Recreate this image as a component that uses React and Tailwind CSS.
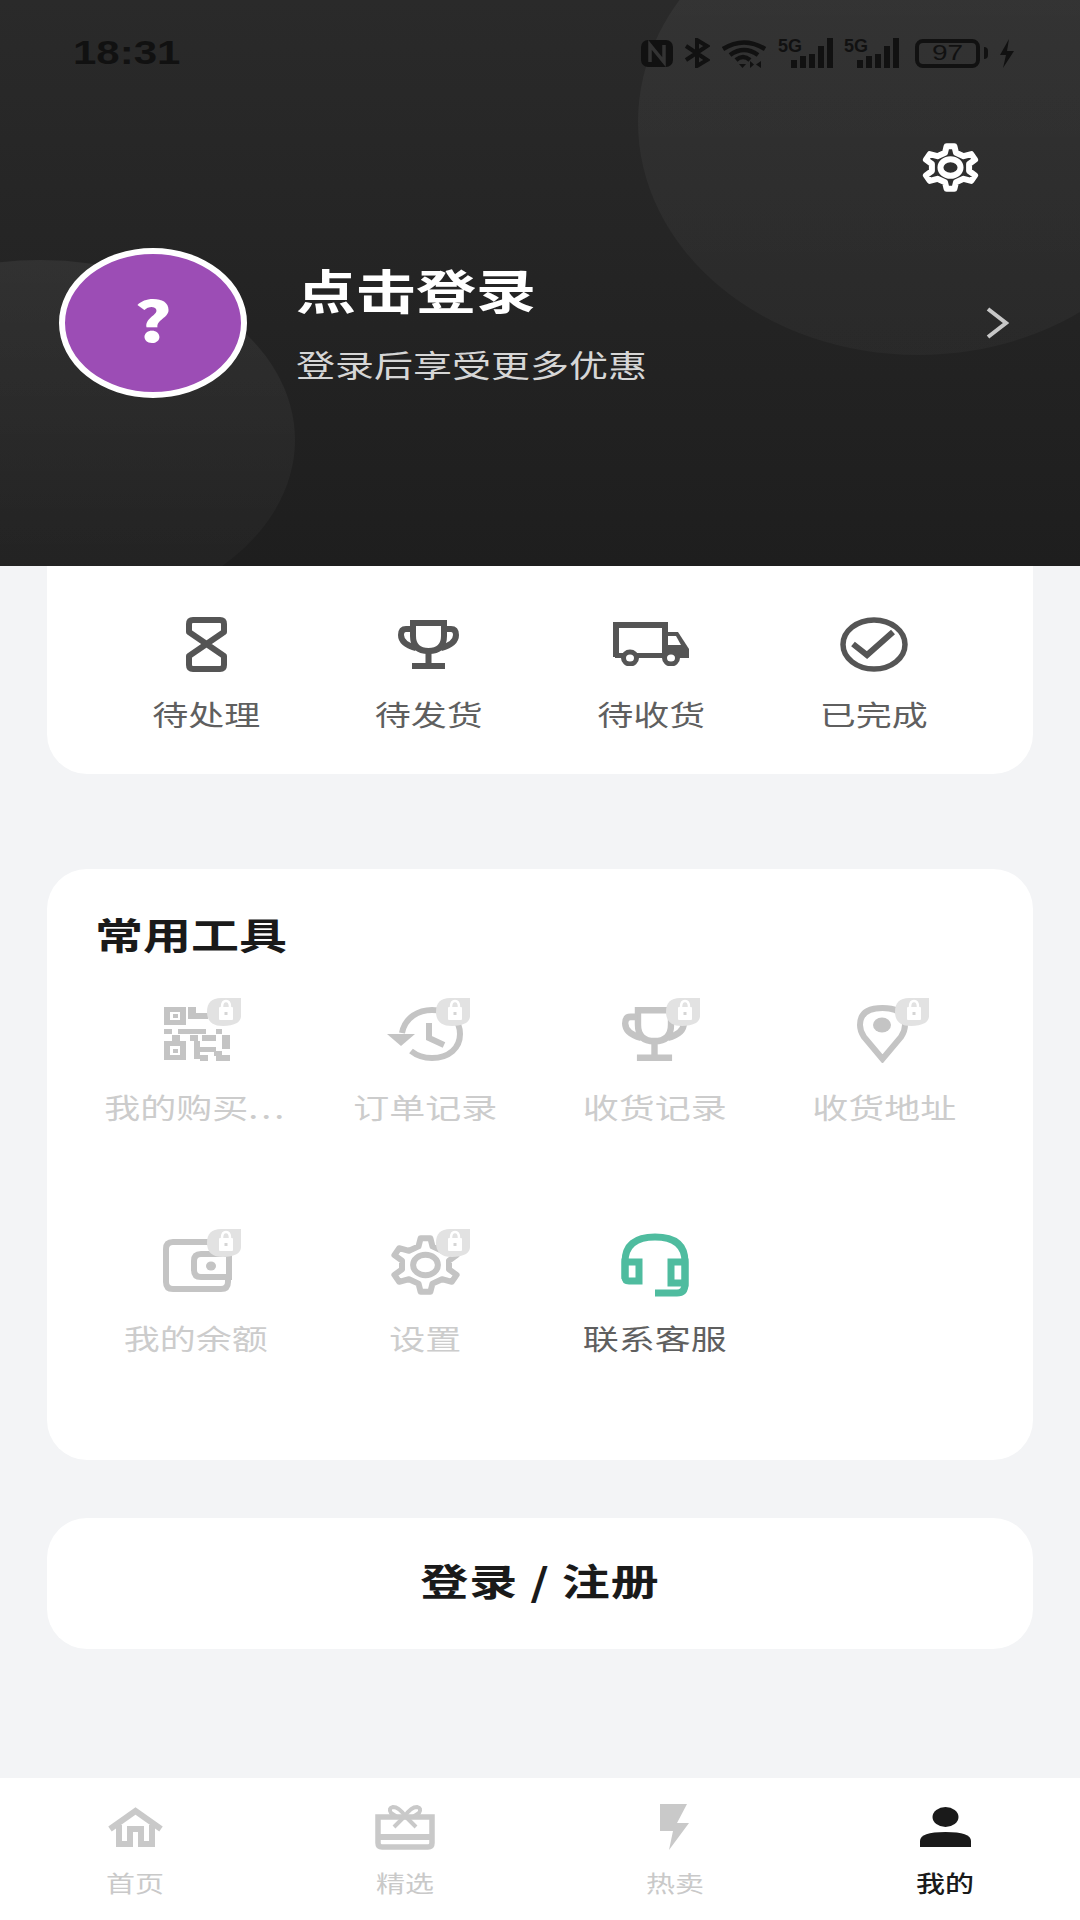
import React from "react";

// builds a gear outline with n teeth, stretched to rx / ry
const gearPath = (cx, cy, rx, ry, n) => {
  const pts = [];
  const step = (Math.PI * 2) / n;
  for (let i = 0; i < n; i++) {
    const a = i * step - Math.PI / 2;
    const corners = [
      [a - step * 0.28, 0.72],
      [a - step * 0.14, 1],
      [a + step * 0.14, 1],
      [a + step * 0.28, 0.72],
    ];
    corners.forEach(([t, r]) => {
      pts.push(`${(cx + Math.cos(t) * rx * r).toFixed(1)} ${(cy + Math.sin(t) * ry * r).toFixed(1)}`);
    });
  }
  return `M${pts.join("L")}Z`;
};

const Gear = ({ w, h, color, sw = 6, hole = 0.34 }) => (
  <svg width={w} height={h} viewBox={`0 0 ${w} ${h}`} fill="none" stroke={color} strokeWidth={sw} strokeLinejoin="round">
    <path d={gearPath(w / 2, h / 2, w / 2 - sw / 2, h / 2 - sw / 2, 6)} />
    <ellipse cx={w / 2} cy={h / 2} rx={w * hole * 0.5} ry={h * hole * 0.5} />
  </svg>
);

const Trophy = ({ w, h, color }) => (
  <svg width={w} height={h} viewBox="0 0 61 49" preserveAspectRatio="none" fill="none" stroke={color} strokeWidth="6">
    <path d="M15 3H46V16Q46 31 30.5 31Q15 31 15 16Z" />
    <path d="M15 9H8Q3 9 3 15Q3 24 18 28M46 9H53Q58 9 58 15Q58 24 43 28" />
    <path d="M30.5 31V44M14 46H47" />
  </svg>
);

const Hourglass = () => (
  <svg width="41" height="55" viewBox="0 0 41 55" fill="none" stroke="#555" strokeWidth="6">
    <path d="M7 3H34Q38 3 38 7V15L3 39V48Q3 52 7 52H34Q38 52 38 48V39L3 15V7Q3 3 7 3Z" strokeLinejoin="round" />
  </svg>
);

const Truck = () => (
  <svg width="76" height="44" viewBox="0 0 76 44" fill="none">
    <path d="M3 35V3H52V35" stroke="#555" strokeWidth="6" />
    <path d="M52 10H65L76 27V36H52Z" fill="#555" />
    <path d="M55 14H63L68 23H55Z" fill="#fff" />
    <rect x="2" y="31" width="50" height="5" fill="#555" />
    <ellipse cx="17" cy="36" rx="6.5" ry="6" fill="#fff" stroke="#555" strokeWidth="5" />
    <ellipse cx="58" cy="36" rx="6.5" ry="6" fill="#fff" stroke="#555" strokeWidth="5" />
  </svg>
);

const CheckOval = () => (
  <svg width="68" height="55" viewBox="0 0 68 55" fill="none" stroke="#555" strokeWidth="5.5">
    <ellipse cx="34" cy="27.5" rx="31" ry="24.5" />
    <path d="M13 27L27 38L53 15" strokeWidth="6" />
  </svg>
);

const qrCells = [
  [24, 0, 8, 12], [32, 6, 12, 6], [44, 0, 8, 6], [54, 6, 10, 10],
  [0, 22, 8, 5], [14, 22, 28, 5], [52, 22, 6, 5], [8, 28, 8, 6], [26, 28, 8, 6], [38, 28, 14, 6], [58, 28, 8, 10],
  [30, 34, 6, 18], [36, 40, 16, 5], [50, 44, 8, 5], [36, 48, 8, 6], [52, 48, 14, 6], [58, 38, 8, 4],
];

const QrCode = () => (
  <svg width="66" height="54" viewBox="0 0 66 54" fill="#c4c4c4">
    <path fillRule="evenodd" d="M0 0H22V18H0ZM6 5V13H16V5Z" />
    <rect x="9" y="7" width="5" height="4" />
    <path fillRule="evenodd" d="M0 34H22V53H0ZM6 39V48H16V39Z" />
    <rect x="9" y="42" width="5" height="4" />
    {qrCells.map(([x, y, w, h]) => (
      <rect key={`${x}-${y}`} x={x} y={y} width={w} height={h} />
    ))}
  </svg>
);

const History = () => (
  <svg width="76" height="54" viewBox="0 0 76 54" fill="none" stroke="#c4c4c4" strokeWidth="6">
    <path d="M15 26C18 10 32 3 45 3C62 3 73 13 73 27C73 41 62 51 45 51C36 51 29 48 24 44" />
    <path d="M0 27H28L14 39Z" fill="#c4c4c4" stroke="none" />
    <path d="M42 16V31L57 38" />
  </svg>
);

const Pin = () => (
  <svg width="51" height="58" viewBox="0 0 51 58" fill="none" stroke="#c4c4c4" strokeWidth="6">
    <path d="M25.5 54L7 32Q3 26 3 20Q3 3 25.5 3Q48 3 48 20Q48 26 44 32Z" />
    <ellipse cx="25" cy="20" rx="9" ry="7.5" fill="#c4c4c4" stroke="none" />
  </svg>
);

const Wallet = () => (
  <svg width="69" height="53" viewBox="0 0 69 53" fill="none" stroke="#c4c4c4" strokeWidth="6">
    <path d="M46 3H10Q3 3 3 10V43Q3 50 10 50H58Q65 50 65 43V40" />
    <path d="M66 15H38Q31 15 31 22V31Q31 38 38 38H66Z" />
    <ellipse cx="48" cy="27" rx="5" ry="4.5" fill="#c4c4c4" stroke="none" />
  </svg>
);

const Headset = () => (
  <svg width="68" height="64" viewBox="0 0 68 64" fill="none" stroke="#4fbc9f" strokeWidth="7">
    <path d="M4 46V29Q4 4 34 4Q64 4 64 29V51Q64 60 56 60H34" />
    <path d="M4 29H18V48H8Q4 48 4 44Z" />
    <path d="M64 29H50V50H64Z" />
  </svg>
);

const LockBadge = () => (
  <svg className="absolute left-[11px] top-0" width="34" height="28" viewBox="0 0 34 28">
    <path d="M14 0H34V18Q34 22 30 25Q24 28 16 28Q0 28 0 14Q0 0 14 0Z" fill="#e2e2e2" />
    <path d="M15 9Q15 3 19 3Q23 3 23 9" fill="none" stroke="#fff" strokeWidth="2.5" />
    <rect x="12" y="9" width="14" height="13" rx="1" fill="#fff" />
    <rect x="17.5" y="14" width="3" height="3" fill="#d5d5d5" />
  </svg>
);

const HomeIcon = () => (
  <svg width="55" height="40" viewBox="0 0 55 40" fill="none" stroke="#c9c9c9" strokeWidth="6">
    <path d="M2 22L27.5 4L53 22" />
    <path d="M11 18V37H22V22H33V37H44V18" />
  </svg>
);

const GiftIcon = () => (
  <svg width="60" height="45" viewBox="0 0 60 45" fill="none" stroke="#c9c9c9" strokeWidth="5.5">
    <path d="M3 12H57V38Q57 42 53 42H7Q3 42 3 38Z" />
    <path d="M3 32H57" strokeWidth="6" />
    <path d="M30 11Q24 2 18 2Q13 3 16 8L22 12M30 11Q36 2 42 2Q47 3 44 8L38 12M30 11L19 22M30 11L41 22" strokeWidth="4" />
  </svg>
);

const BoltIcon = () => (
  <svg width="30" height="46" viewBox="0 0 30 46" fill="#c9c9c9">
    <path d="M0 0H27L17 19H29L9 46L13 27H0Z" />
  </svg>
);

const PersonIcon = () => (
  <svg width="51" height="40" viewBox="0 0 51 40" fill="#1a1a1a">
    <ellipse cx="25.5" cy="10" rx="13" ry="10" />
    <path d="M0 40V34Q0 25 25.5 25Q51 25 51 34V40Z" />
  </svg>
);

const Signal = () => (
  <svg width="55" height="30" viewBox="0 0 55 30" fill="#111" className="overflow-visible">
    <text x="0" y="14" fontSize="18" fontWeight="700" fontFamily="Liberation Sans, sans-serif">5G</text>
    <rect x="13" y="22" width="6" height="8" />
    <rect x="22" y="18" width="6" height="12" />
    <rect x="31" y="16" width="6" height="14" />
    <rect x="40" y="8" width="6" height="22" />
    <rect x="49" y="0" width="6" height="30" />
  </svg>
);

const StatusBar = () => (
  <div className="flex items-center justify-between pl-[73px] pr-[66px] pt-[38px] h-[68px] relative">
    <span className="block scale-y-[0.8] text-[42px] leading-none font-bold text-[#111] font-['Liberation_Sans',sans-serif]">18:31</span>
    <div className="flex items-center gap-[11px]">
      <svg width="32" height="27" viewBox="0 0 32 27">
        <rect width="32" height="27" rx="7" fill="#111" />
        <path d="M9 22V5L23 22V5" fill="none" stroke="#333" strokeWidth="3.5" />
      </svg>
      <svg width="26" height="30" viewBox="0 0 26 30" fill="none" stroke="#111" strokeWidth="4">
        <path d="M2 8L23 22L13 28V2L23 8L2 22" />
      </svg>
      <svg width="46" height="29" viewBox="0 0 46 29" fill="none" stroke="#111" strokeWidth="4.5">
        <path d="M2 10Q23 -3 44 10M9 16Q23 6 37 16M15 21Q22 15 29 21" />
        <path d="M18 25H25L21.500 29ZM29 29V22L33 25.500ZM40 22V29L35 25.500Z" fill="#111" stroke="none" />
      </svg>
      <Signal />
      <Signal />
      <div className="flex items-center gap-[4px] ml-[5px]">
        <div className="w-[65px] h-[29px] rounded-[8px] border-[4px] border-[#111] flex items-center justify-center">
          <span className="block scale-y-[0.8] text-[28px] leading-none text-[#111] font-['Liberation_Sans',sans-serif]">97</span>
        </div>
        <div className="w-[4px] h-[12px] bg-[#111] rounded-r-sm" />
      </div>
      <svg width="15" height="29" viewBox="0 0 15 29" fill="#111">
        <path d="M10 0L1 16H7L4 29L15 12H8Z" />
      </svg>
    </div>
  </div>
);

const orders = [
  { label: "待处理", icon: <Hourglass /> },
  { label: "待发货", icon: <Trophy w={61} h={49} color="#555" /> },
  { label: "待收货", icon: <Truck /> },
  { label: "已完成", icon: <CheckOval /> },
];

const tools = [
  { label: "我的购买", dots: true, icon: <QrCode />, locked: true, nudge: "pl-[2px]" },
  { label: "订单记录", icon: <History />, locked: true },
  { label: "收货记录", icon: <Trophy w={65} h={54} color="#c4c4c4" />, locked: true },
  { label: "收货地址", icon: <Pin />, locked: true, nudge: "pr-[4px]" },
  { label: "我的余额", icon: <Wallet />, locked: true, nudge: "pl-[4px]" },
  { label: "设置", icon: <Gear w={73} h={60} color="#c4c4c4" />, locked: true },
  { label: "联系客服", icon: <Headset />, locked: false },
];

const tabs = [
  { label: "首页", icon: <HomeIcon /> },
  { label: "精选", icon: <GiftIcon /> },
  { label: "热卖", icon: <BoltIcon /> },
  { label: "我的", icon: <PersonIcon />, active: true },
];

export default function App() {
  return (
    <div className="w-[1080px] h-[1920px] flex flex-col overflow-hidden bg-[#f3f4f6] font-['Noto_Sans_CJK_SC',sans-serif]">
      {/* profile header */}
      <header className="relative h-[566px] shrink-0 overflow-hidden bg-gradient-to-b from-[#2a2a2a] to-[#1e1e1e]">
        <div className="absolute left-[638px] top-[-111px] w-[560px] h-[466px] rounded-[50%] bg-gradient-to-b from-white/[0.05] to-white/[0.03]" />
        <div className="absolute left-[-215px] top-[260px] w-[510px] h-[360px] rounded-[50%] bg-gradient-to-b from-white/[0.06] to-white/[0.015]" />
        <div className="relative">
          <StatusBar />
          <div className="flex justify-end pr-[100px] mt-[75px]">
            <Gear w={59} h={49} color="#fff" sw={6} hole={0.34} />
          </div>
          <div className="flex items-center pl-[59px] pr-[71px] mt-[56px]">
            <div className="w-[188px] h-[150px] rounded-[50%] border-[6px] border-white bg-[#9c4db5] flex items-center justify-center shrink-0 pb-[10px]">
              <span className="block scale-y-[0.8] text-[70px] leading-none font-black text-white">?</span>
            </div>
            <div className="ml-[49px] mb-[4px] flex flex-col gap-[26px]">
              <span className="block scale-y-[0.78] text-[60px] leading-none font-bold text-white">点击登录</span>
              <span className="block scale-y-[0.78] text-[39px] leading-none text-[#d6d6d6]">登录后享受更多优惠</span>
            </div>
            <svg className="ml-auto" width="23" height="32" viewBox="0 0 23 32" fill="none" stroke="#c8c8c8" strokeWidth="4">
              <path d="M2 2L20 16L2 30" />
            </svg>
          </div>
        </div>
      </header>

      {/* order status card, its top edge sits against the header */}
      <section className="mx-[47px] bg-white rounded-b-[40px] grid grid-cols-4 px-[48px] pt-[50px] pb-[42px]">
        {orders.map((o) => (
          <div key={o.label} className="flex flex-col items-center">
            <div className="h-[56px] flex items-center justify-center">{o.icon}</div>
            <span className="mt-[24px] block scale-y-[0.78] text-[36px] leading-none text-[#5f5f5f]">{o.label}</span>
          </div>
        ))}
      </section>

      {/* common tools */}
      <section className="mx-[47px] mt-[95px] bg-white rounded-[40px] pt-[41px] pb-[104px] px-[34px]">
        <h2 className="pl-[14px] block scale-y-[0.78] origin-center text-[48px] leading-none font-bold text-[#1a1a1a]">常用工具</h2>
        <div className="mt-[40px] grid grid-cols-4 gap-y-[104px]">
          {tools.map((t) => (
            <div key={t.label} className="flex flex-col items-center">
              <div className="relative h-[66px] w-0 flex items-center justify-center">
                <div className={`shrink-0 pt-[6px] ${t.nudge ?? ""}`}>{t.icon}</div>
                {t.locked && <LockBadge />}
              </div>
              <span className={`mt-[25px] block scale-y-[0.78] text-[36px] leading-none whitespace-nowrap ${t.locked ? "text-[#cccccc]" : "text-[#5f5f5f]"}`}>
                {t.label}
                {t.dots && <span className="tracking-[3px]">...</span>}
              </span>
            </div>
          ))}
        </div>
      </section>

      <button className="mx-[47px] mt-[58px] h-[131px] shrink-0 bg-white rounded-[40px] flex items-center justify-center pb-[7px]">
        <span className="block scale-y-[0.78] text-[48px] leading-none font-bold text-[#1a1a1a] tracking-[1px]">登录 / 注册</span>
      </button>

      {/* bottom tab bar */}
      <nav className="mt-auto h-[142px] shrink-0 bg-white grid grid-cols-4 pt-[26px]">
        {tabs.map((t) => (
          <div key={t.label} className="flex flex-col items-center">
            <div className="h-[46px] flex items-center justify-center">{t.icon}</div>
            <span className={`mt-[18px] block scale-y-[0.78] text-[29px] leading-none ${t.active ? "text-[#1a1a1a] font-medium" : "text-[#c9c9c9]"}`}>
              {t.label}
            </span>
          </div>
        ))}
      </nav>
    </div>
  );
}
